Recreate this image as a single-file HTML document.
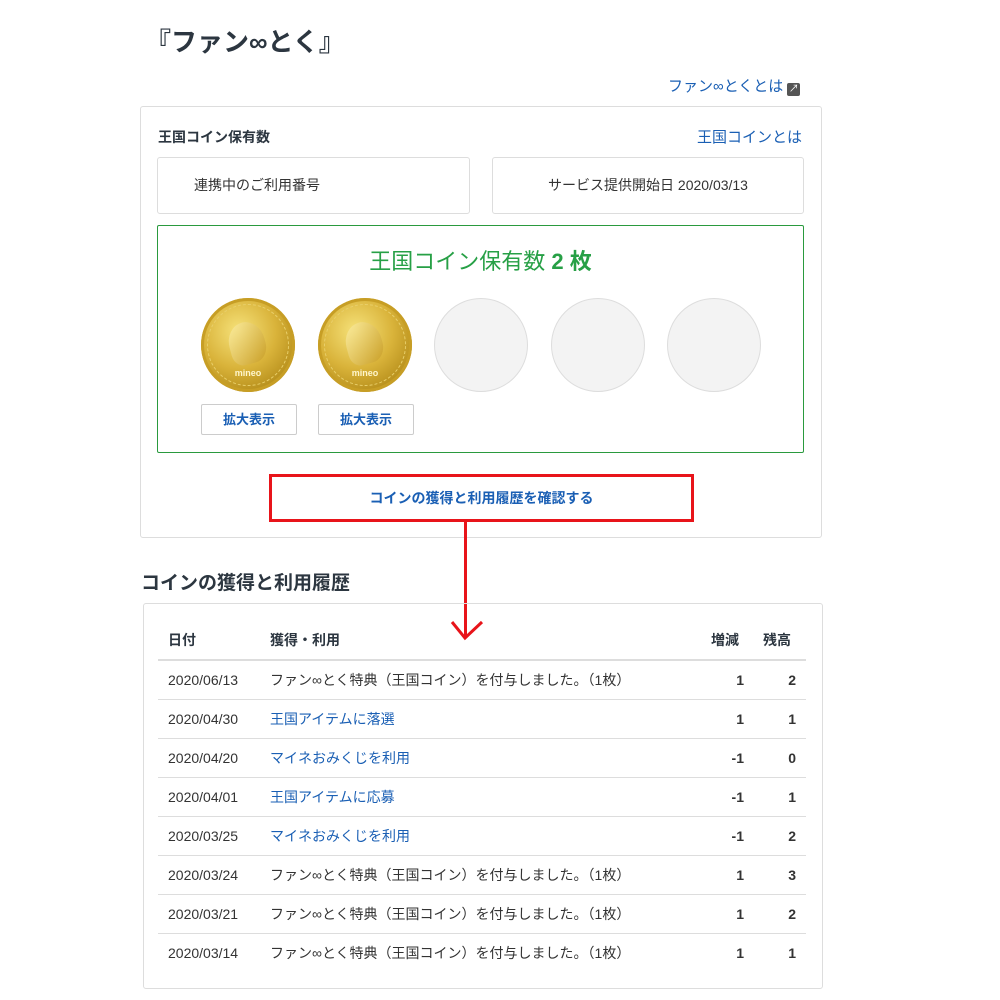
<!DOCTYPE html>
<html><head><meta charset="utf-8"><style>
*{box-sizing:border-box;margin:0;padding:0}
body{width:1000px;height:1000px;background:#fff;font-family:"Liberation Sans","Noto Sans CJK JP",sans-serif;color:#333;position:relative;overflow:hidden}
.a{position:absolute}
.blue{color:#1a5fb4}
.box{border:1px solid #ddd;border-radius:3px}
.coin{position:absolute;width:94px;height:94px;border-radius:50%}
.gold{background:radial-gradient(circle at 40% 35%,#f6e27a 0%,#d9b33a 45%,#b28a18 80%,#8a6a10 100%);box-shadow:inset 0 0 0 3px #c79e25}
.gold:before{content:"";position:absolute;left:6px;top:6px;right:6px;bottom:6px;border-radius:50%;border:1px dashed #e9cf6a}
.gold i{position:absolute;left:28px;top:24px;width:36px;height:42px;background:linear-gradient(135deg,#fff2a8,#c69a22);border-radius:50% 50% 40% 30%;transform:rotate(-15deg);opacity:.8}
.gold b{position:absolute;left:0;right:0;top:70px;text-align:center;font-size:9px;color:#fff6cc}
.empty{background:#f3f3f3;border:1px solid #ddd}
.btn{position:absolute;width:96px;height:31px;border:1px solid #ccc;border-radius:2px;font-size:13px;font-weight:bold;color:#1a5fb4;text-align:center;line-height:29px}
.row{position:absolute;left:158px;width:648px;height:39px;border-bottom:1px solid #ddd;font-size:14px;line-height:38px}
.row span{position:absolute}
</style></head><body>
<div class="a" style="left:145px;top:22px;font-size:26px;font-weight:bold;color:#2c3640">『ファン∞とく』</div>
<div class="a blue" style="left:668px;top:75px;font-size:15px">ファン∞とくとは <span style="display:inline-block;width:13px;height:13px;background:#555;border-radius:2px;vertical-align:-1px;color:#fff;font-size:10px;line-height:13px;text-align:center">↗</span></div>

<div class="a box" style="left:140px;top:106px;width:682px;height:432px"></div>
<div class="a" style="left:158px;top:127px;font-size:14px;font-weight:bold;color:#2c3640">王国コイン保有数</div>
<div class="a blue" style="left:697px;top:126px;font-size:15px">王国コインとは</div>
<div class="a box" style="left:157px;top:157px;width:313px;height:57px;font-size:14px;line-height:55px;padding-left:36px">連携中のご利用番号</div>
<div class="a box" style="left:492px;top:157px;width:312px;height:57px;font-size:14px;line-height:55px;text-align:center">サービス提供開始日 2020/03/13</div>
<div class="a" style="left:157px;top:225px;width:647px;height:228px;border:1px solid #2a9a3e;border-radius:2px"></div>
<div class="a" style="left:157px;top:244px;width:647px;text-align:center;font-size:22px;color:#27a046">王国コイン保有数 <b>2 枚</b></div>
<div class="coin gold" style="left:201px;top:298px"><i></i><b>mineo</b></div>
<div class="coin gold" style="left:318px;top:298px"><i></i><b>mineo</b></div>
<div class="coin empty" style="left:434px;top:298px"></div>
<div class="coin empty" style="left:551px;top:298px"></div>
<div class="coin empty" style="left:667px;top:298px"></div>
<div class="btn" style="left:201px;top:404px">拡大表示</div>
<div class="btn" style="left:318px;top:404px">拡大表示</div>
<div class="a" style="left:269px;top:474px;width:425px;height:48px;border:3px solid #e8141a;text-align:center;line-height:42px;font-size:14px;font-weight:bold;color:#1a5fb4">コインの獲得と利用履歴を確認する</div>
<div class="a" style="left:464px;top:521px;width:3px;height:116px;background:#e8141a"></div>
<svg class="a" style="left:448px;top:618px" width="40" height="24"><path d="M4 4 L17 20 L34 4" stroke="#e8141a" stroke-width="3" fill="none"/></svg>

<div class="a" style="left:141px;top:568px;font-size:19px;font-weight:bold;color:#2c3640">コインの獲得と利用履歴</div>
<div class="a box" style="left:143px;top:603px;width:680px;height:386px"></div>
<div class="a" style="left:158px;top:620px;width:648px;height:41px;border-bottom:2px solid #ddd;font-size:14px;font-weight:bold;line-height:40px;color:#2c3640">
<span class="a" style="left:10px">日付</span><span class="a" style="left:112px">獲得・利用</span><span class="a" style="left:553px">増減</span><span class="a" style="left:605px">残高</span></div>
<div id="rows"></div>
<script>
var d=[["2020/06/13","ファン∞とく特典（王国コイン）を付与しました。（1枚）",0,"1","2"],["2020/04/30","王国アイテムに落選",1,"1","1"],["2020/04/20","マイネおみくじを利用",1,"-1","0"],["2020/04/01","王国アイテムに応募",1,"-1","1"],["2020/03/25","マイネおみくじを利用",1,"-1","2"],["2020/03/24","ファン∞とく特典（王国コイン）を付与しました。（1枚）",0,"1","3"],["2020/03/21","ファン∞とく特典（王国コイン）を付与しました。（1枚）",0,"1","2"],["2020/03/14","ファン∞とく特典（王国コイン）を付与しました。（1枚）",0,"1","1"]];
var h="";d.forEach(function(r,i){h+='<div class="row" style="top:'+(661+i*39)+'px'+(i==7?';border-bottom:none':'')+'"><span style="left:10px">'+r[0]+'</span><span style="left:112px'+(r[2]?';color:#1a5fb4':'')+'">'+r[1]+'</span><span style="right:62px;font-weight:bold">'+r[3]+'</span><span style="right:10px;font-weight:bold">'+r[4]+'</span></div>';});
document.getElementById("rows").innerHTML=h;
</script>
</body></html>
